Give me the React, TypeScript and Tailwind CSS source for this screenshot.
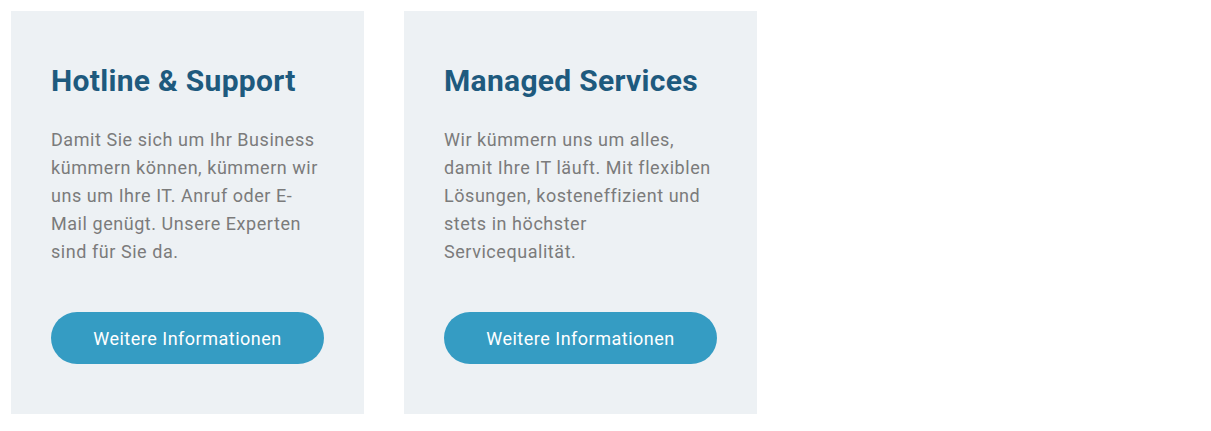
const cards = [
  {
    title: "Hotline & Support",
    text: "Damit Sie sich um Ihr Business kümmern können, kümmern wir uns um Ihre IT. Anruf oder E-Mail genügt. Unsere Experten sind für Sie da.",
  },
  {
    title: "Managed Services",
    text: "Wir kümmern uns um alles, damit Ihre IT läuft. Mit flexiblen Lösungen, kosteneffizient und stets in höchster Servicequalität.",
  },
];

export default function App() {
  return (
    <div className="flex gap-10 p-[11px] bg-white font-[Roboto,sans-serif]">
      {cards.map((card) => (
        <div
          key={card.title}
          className="flex w-[353px] h-[403px] flex-col bg-[#edf1f4] px-10 pt-[58px] pb-[50px]"
        >
          <h2 className="text-[30px] font-bold leading-[24px] tracking-[0.01em] text-[#1e5a7e]">
            {card.title}
          </h2>
          <p className="mt-[33px] text-[18px] leading-[28px] tracking-[0.55px] text-[#7b7b7b]">
            {card.text}
          </p>
          <button className="mt-auto h-[52px] w-[273px] shrink-0 rounded-full bg-[#359cc3] text-[18px] tracking-[0.5px] text-white">
            Weitere Informationen
          </button>
        </div>
      ))}
    </div>
  );
}
